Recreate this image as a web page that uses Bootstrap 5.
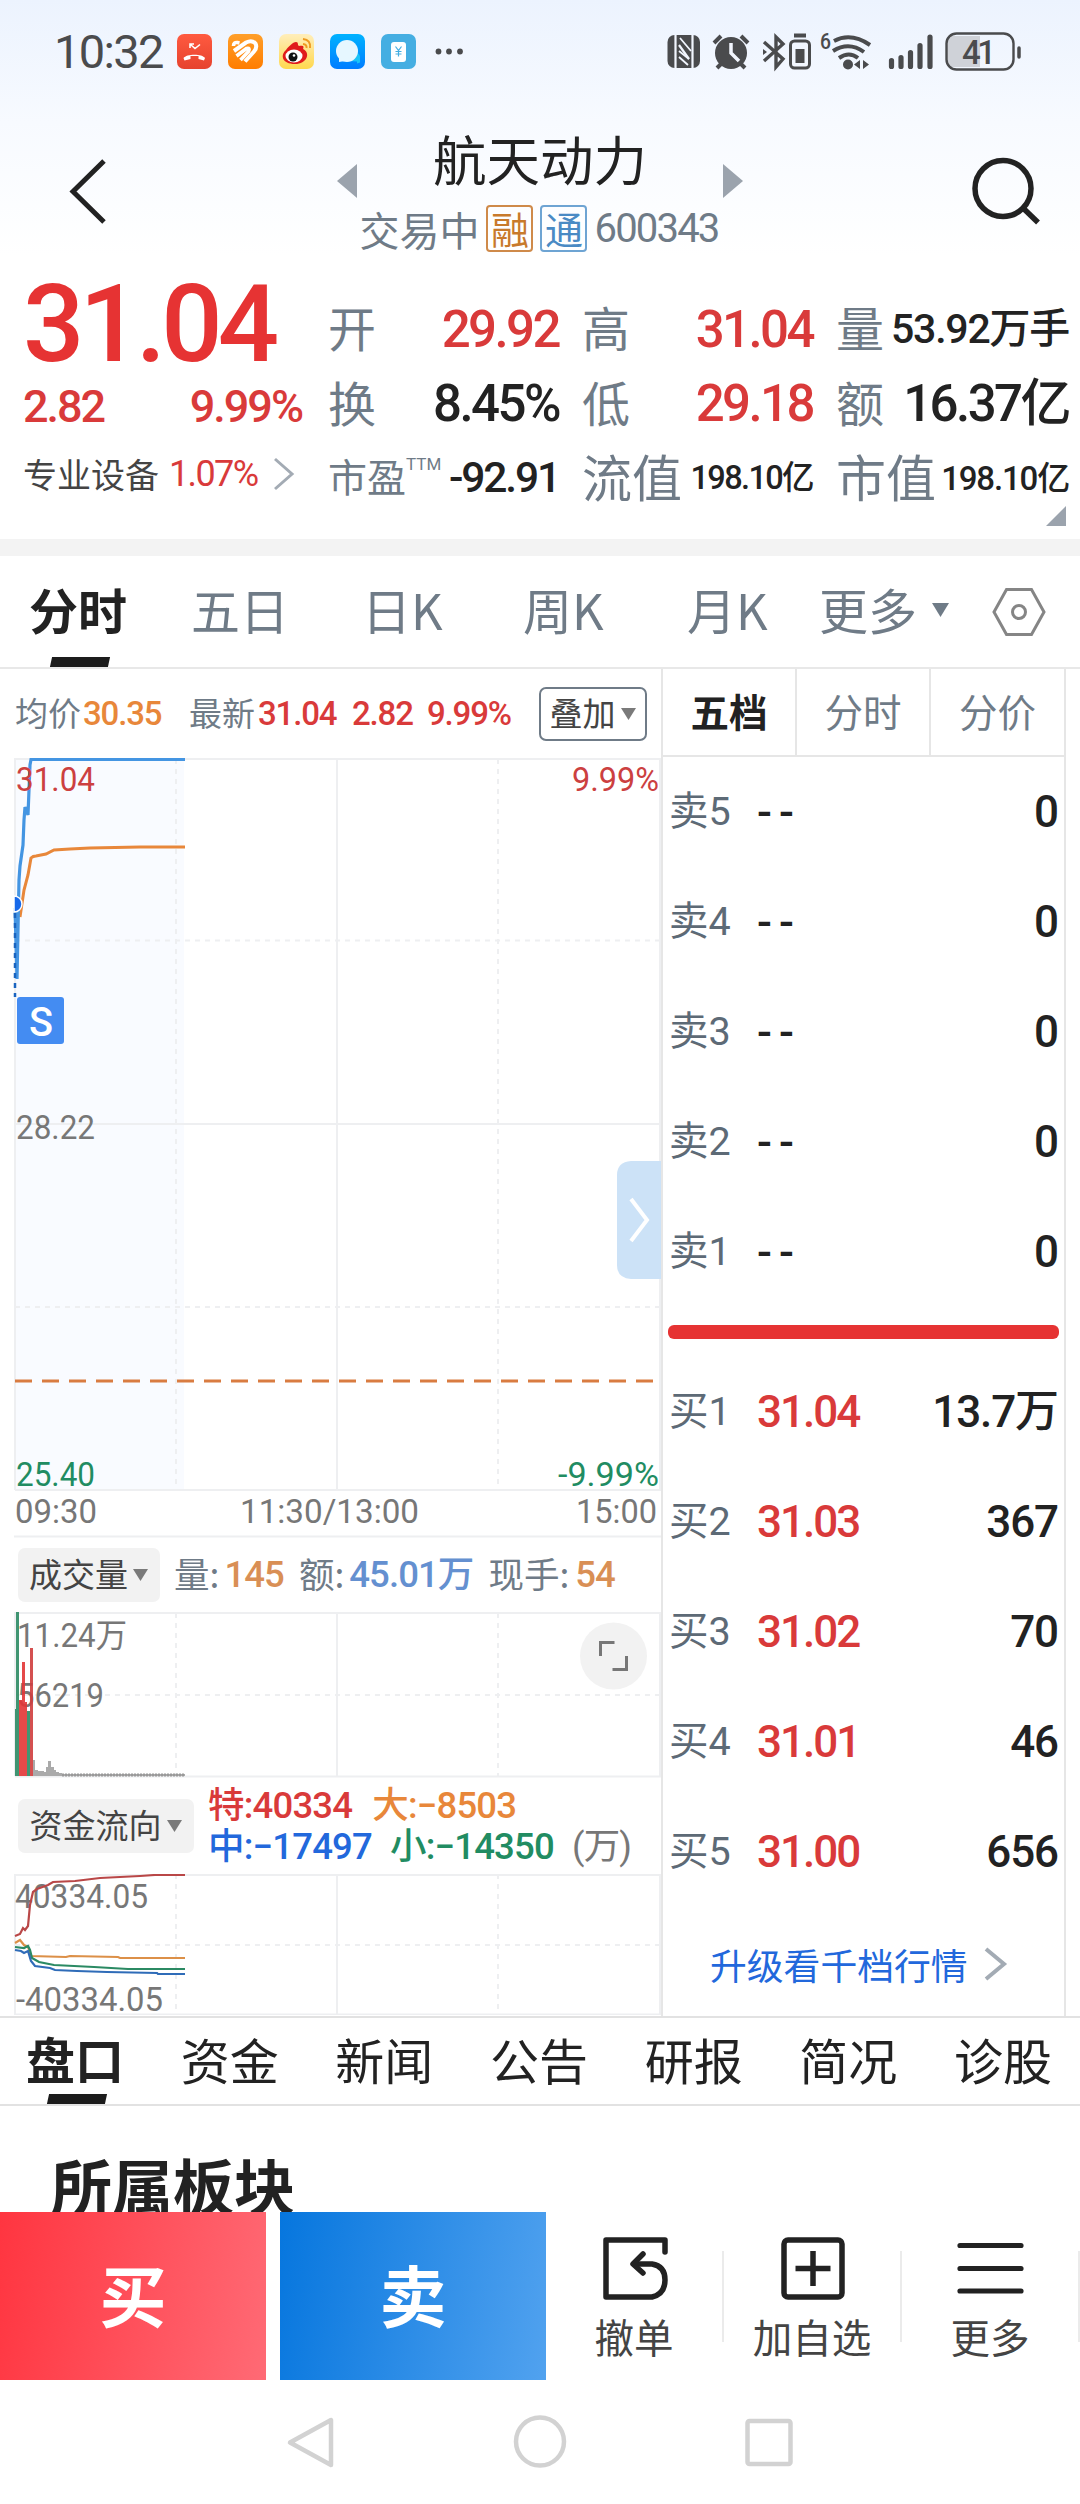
<!DOCTYPE html>
<html lang="zh-CN">
<head>
<meta charset="utf-8">
<meta name="viewport" content="width=device-width, initial-scale=1">
<title>航天动力 600343</title>
<link rel="stylesheet" href="https://cdn.jsdelivr.net/npm/bootstrap@5.3.0/dist/css/bootstrap.min.css">
<style>
:root{--ink:#222;--slate:#6f7b87;--up:#d93a3a;--down:#218c62;--orange:#e8873a;--line:#e6e6e6}
body{width:1080px;height:2504px;overflow:hidden;background:#fff;color:var(--ink);font-family:Roboto,"Noto Sans CJK SC",sans-serif;line-height:1;letter-spacing:0}
svg{display:block;flex:none}
.num{font-family:Roboto,"Noto Sans CJK SC",sans-serif;letter-spacing:-.045em;white-space:nowrap}
.med{font-weight:500}
.cjk{font-family:"Noto Sans CJK SC",sans-serif;white-space:nowrap}
.slate{color:var(--slate)}.up{color:var(--up)}.down{color:var(--down)}.orange{color:var(--orange)}.blue{color:#2268dc}
.top-zone{height:270px;background:linear-gradient(#ecf3fe,#f7faff 45%,#fff 95%)}
.status{height:103px;padding:0 58px 0 54px}
.clock{font-size:47px;color:#4a4b4d;font-weight:400;letter-spacing:-.035em;width:123px}
.head{height:167px}
.head-mid{width:412px;padding-top:28px}
.head-mid svg{overflow:visible}
.stock{font-size:53.5px;line-height:54px}
.sub{font-size:40px;margin-top:20px;gap:7px;margin-right:2px}
.mark-box{width:47px;height:47px;border:2px solid #cf8a4a;border-radius:4px;font-size:38px;line-height:38px;color:#c87a2c;padding-bottom:2px}
.mark-box.tong{border-color:#6ea4d3;color:#4a8ac4}
.quote{height:269px;display:grid;grid-template-columns:305px 254px 254px 256px}
.quote .qc{padding-left:23px}
.big{font-size:108px;color:#e63333;font-weight:500;letter-spacing:-.045em;height:108px;line-height:108px}
.chg{font-size:45px;height:56px;padding-right:3px}
.sector{height:80px;font-size:34px}
.qrow{height:74.500px}
.qrow>.cjk,.qrow>.d-flex{padding-bottom:6px}
.ql{font-size:48px}
.ql2{font-size:50px}
.qv{font-size:51px;font-weight:500;letter-spacing:-.05em}
.band{height:17px;background:#f3f3f3}
.ktabs{height:113px;border-bottom:2px solid #e8e8e8;display:grid;grid-template-columns:29px 162px 171px 161px 164px 132px 112px 60px 1fr;font-size:49px;align-items:center;color:var(--slate)}
.ktabs>span{padding-bottom:6px}
.slant{height:10px;width:58px;background:#1c1c1c;transform:skewX(-12deg)}
.main{height:1349px;border-bottom:2px solid #e2e2e2}
.left{width:661px}
.info{height:89px;margin-left:15px;display:grid;grid-template-columns:68px 106px 69px 94px 75px 112px 1fr;align-items:center;font-size:33px}
.info .med{letter-spacing:-.035em}
.info>.cjk{padding-bottom:3px}
.pillbtn{height:54px;border-radius:7px;font-size:33px;color:#444}
.pillbtn .cjk{padding-bottom:3px}
.overlay-btn{border:2px solid #6f7b87;width:108px}
.gray-btn{background:#f2f2f2}
.volrow{height:74px;padding-left:18px;font-size:35.500px}
.volrow .num{font-size:36.500px;letter-spacing:-.025em}
.volrow>.slate{padding-bottom:4px}
.fundrow{height:96px;padding-left:18px;font-size:36.500px}
.fundrow .num{letter-spacing:-.022em;line-height:41px;margin-left:14px}
.right-col{width:405px;border-left:2px solid var(--line);border-right:2px solid var(--line)}
.btabs{height:88px;border-bottom:2px solid var(--line);font-size:38.500px}
.btabs>div{width:134px;border-right:2px solid var(--line);padding-bottom:4px}
.btabs>div:last-child{border:0;width:133px}
.lv{height:110px;display:grid;grid-template-columns:88px 1fr auto;align-items:center;padding:0 6px 1px 6px;font-size:44px}
.lv .lab{font-size:39.500px;color:#5d6a76;letter-spacing:0}
.lv .med:last-child{letter-spacing:-.025em}
.bar-split{height:14px;border-radius:6px;background:#e63333;margin:18px 5px 18px 5px}
.more-link{height:114px;font-size:36.800px;padding-left:47px;gap:16px}
.btm-tabs{height:88px;border-bottom:2px solid #e2e2e2;padding:0 28px 0 26px;font-size:49px}
.btm-tabs>span{padding-bottom:6px}
.sect{height:106px;overflow:hidden;padding:48px 0 0 51px;font-size:61px;font-weight:700}
.acts{height:168px}
.buy,.sell{width:266px;font-size:67px;font-weight:700;color:#fff;padding-bottom:8px}
.buy{background:linear-gradient(100deg,#ff3540,#ff6a75)}
.sell{background:linear-gradient(100deg,#0676de,#51a2ef);margin-left:14px}
.act{width:176px;font-size:39.500px;color:#444;padding-top:22px;gap:12px}
.vsep{width:2px;height:91px;background:#ebebeb}
.sysnav{height:124px}
svg text{font-family:Roboto,"Noto Sans CJK SC",sans-serif}
</style>
<script src="https://cdn.jsdelivr.net/npm/bootstrap@5.3.0/dist/js/bootstrap.bundle.min.js"></script>
</head>
<body>
<header class="top-zone">
  <div class="status d-flex align-items-center">
    <span class="num clock">10:32</span>
    <svg width="290" height="36" viewBox="177 34 290 36">
      <defs>
        <linearGradient id="ga" x2="0" y2="1"><stop stop-color="#ff5a40"/><stop offset="1" stop-color="#e6432e"/></linearGradient>
        <linearGradient id="gb" x2="0" y2="1"><stop stop-color="#ff9f2a"/><stop offset="1" stop-color="#ff7d00"/></linearGradient>
        <linearGradient id="gc" x2="0" y2="1"><stop stop-color="#ffeebb"/><stop offset="1" stop-color="#ffd84e"/></linearGradient>
        <linearGradient id="gd" x2="0" y2="1"><stop stop-color="#00b2ff"/><stop offset="1" stop-color="#007dff"/></linearGradient>
      </defs>
      <rect x="177" y="34" width="35" height="35" rx="7" fill="url(#ga)"/>
      <path d="M183.500 58c3-4.500 19-4.500 21.500 0l-1 2.500-5.500-1.500v-3h-8v3l-6 1.500z" fill="#fff"/>
      <path d="M190 48v-4h4M190.500 44.500l4.500 4 5-4" fill="none" stroke="#fff" stroke-width="1.600"/>
      <rect x="228" y="34" width="35" height="35" rx="7" fill="url(#gb)"/>
      <g fill="none" stroke="#fff" stroke-width="4"><path d="M234 51L246 42.500q6-3 9.500 1 2 4-1.500 8l-9 10"/><path d="M233.500 46q0-4 4-3.500l2 .5M236.500 56l10-7.500q4-1 2 3l-8 8.500" stroke-width="3.600"/></g>
      <rect x="279" y="34" width="35" height="35" rx="7" fill="url(#gc)"/>
      <path d="M296 42c3 0 1 3 3 4 5-1 5 1 4 3 8 4 4 15-8 15-13 0-15-9-9-14 2-3 7-8 10-8z" fill="#e01b1b"/>
      <ellipse cx="294" cy="56" rx="8.500" ry="6.500" fill="#fff"/><circle cx="293" cy="57" r="4.500" fill="#111"/><circle cx="294" cy="55.500" r="1.300" fill="#fff"/>
      <path d="M303 39q8 1 7 9M303 44q4 .5 3.500 4" fill="none" stroke="#ee9a20" stroke-width="2"/>
      <rect x="330" y="34" width="35" height="35" rx="7" fill="url(#gd)"/>
      <path d="M349 61l8 .5v2l3-1v-6q-1-4-5-4z" fill="#19c3f7"/>
      <circle cx="347" cy="51" r="11" fill="#e6f7ff"/><path d="M339 57l0 5 6-1z" fill="#e6f7ff"/>
      <rect x="381" y="34" width="35" height="35" rx="7" fill="#45aee2"/>
      <rect x="391" y="42" width="15" height="20" rx="3" fill="#fff"/>
      <path d="M395.500 46.500l3 4 3-4M398.500 50.500v6M395.500 51.500h6M395.500 54h6" fill="none" stroke="#45aee2" stroke-width="1.200"/>
      <g fill="#4a4b4d"><circle cx="438.500" cy="51.500" r="2.900"/><circle cx="449" cy="51.500" r="2.900"/><circle cx="460" cy="51.500" r="2.900"/></g>
    </svg>
    <svg class="ms-auto" width="357" height="42" viewBox="665 31 357 42" fill="none" stroke="#4a4b4d" stroke-width="3">
      <rect x="667.500" y="35" width="32.500" height="33" rx="7" fill="#4a4b4d" stroke="none"/>
      <path d="M675.500 35v33M692.500 35v33" stroke="#f2f6fe" stroke-width="2.200"/>
      <path d="M679 45l10 14" stroke="#f2f6fe" stroke-width="2.200"/><path d="M679 51l10 8M679 57l9 8M680 38l11 13" stroke="#f2f6fe" stroke-width="1.800"/>
      <circle cx="731" cy="53" r="16" fill="#4a4b4d" stroke="none"/>
      <path d="M714 43l7-7M748 43l-7-7M717 68l4-4M745 68l-4-4" stroke-width="4"/>
      <path d="M731 43v10l8 8" stroke="#f2f6fe" stroke-width="3.500"/>
      <path d="M764 42l19 17-7 8V37l7 7-19 17" stroke-width="3.400"/><path d="M763 49l4 3-4 3z" fill="#4a4b4d" stroke="none"/>
      <rect x="790.500" y="41" width="19" height="27" rx="4"/><path d="M794 35.500h12" stroke-width="4"/><rect x="795.500" y="49" width="9" height="14" fill="#4a4b4d" stroke="none"/>
      <text x="820" y="49" font-size="22" font-weight="500" fill="#4a4b4d" stroke="none" textLength="11" lengthAdjust="spacingAndGlyphs">6</text>
      <path d="M834 41q17-9 36 4M833 51q16-10 31 1M839 58q10-7 19 0" stroke-width="4"/>
      <circle cx="848" cy="64.500" r="5" fill="#4a4b4d" stroke="none"/><path d="M860 60v9l-6-4.500zM863 60v9l6-4.500z" fill="#4a4b4d" stroke="none"/>
      <path d="M891.500 60.500v6M901 57.500v9M910.500 52.500v14M920 45.500v21M930 37v29.500" stroke-width="5.200" stroke-linecap="round"/>
      <path d="M950 36h30v31h-30q-3.500-1-3.500-5V41q0-4 3.500-5z" fill="#cfd2d8" stroke="none"/>
      <rect x="946.500" y="33.500" width="67" height="36" rx="10" stroke-width="2.400"/>
      <path d="M1019 48v9" stroke-width="3.500" stroke-linecap="round"/>
      <text x="962" y="63.500" font-size="33" font-weight="500" fill="#4a4b4d" stroke="none" textLength="34">41</text>
    </svg>
  </div>
  <div class="head d-flex justify-content-between">
    <svg width="334" height="167" viewBox="0 103 334 167"><path d="M104 161L73 191.500l31 30.500" fill="none" stroke="#222" stroke-width="5"/></svg>
    <div class="head-mid d-flex flex-column align-items-center">
      <div class="d-flex align-items-center justify-content-between w-100">
        <svg width="24" height="54" viewBox="334 131 24 54"><path d="M357 164v34l-20-17z" fill="#9ba3ad"/></svg>
        <span class="cjk stock">航天动力</span>
        <svg width="24" height="54" viewBox="722 131 24 54"><path d="M723 164v34l20-17z" fill="#9ba3ad"/></svg>
      </div>
      <div class="sub d-flex align-items-center slate">
        <span class="cjk">交易中</span>
        <span class="cjk mark-box d-flex align-items-center justify-content-center">融</span>
        <span class="cjk mark-box tong d-flex align-items-center justify-content-center">通</span>
        <span class="num">600343</span>
      </div>
    </div>
    <svg width="334" height="167" viewBox="746 103 334 167" fill="none" stroke="#222" stroke-width="5.500"><circle cx="1003" cy="188.500" r="28"/><path d="M1023 208l15 14.500"/></svg>
  </div>
</header>

<section class="quote">
  <div class="qc">
    <div class="num big">31.04</div>
    <div class="d-flex justify-content-between align-items-center num med up chg"><span>2.82</span><span>9.99%</span></div>
    <div class="d-flex align-items-center sector">
      <span class="cjk" style="color:#444">专业设备</span><span class="num up" style="font-size:36px;margin-left:10px">1.07%</span>
      <svg class="ms-auto" width="32" height="36" viewBox="0 0 32 36"><path d="M2 3l17 15L2 33" fill="none" stroke="#a3abb4" stroke-width="3"/></svg>
    </div>
  </div>
  <div class="qc" style="padding-top:22px">
    <div class="qrow d-flex justify-content-between align-items-center"><span class="cjk ql slate">开</span><span class="num qv up">29.92</span></div>
    <div class="qrow d-flex justify-content-between align-items-center"><span class="cjk ql slate">换</span><span class="num qv">8.45%</span></div>
    <div class="qrow d-flex justify-content-between align-items-center"><span class="d-flex"><span class="cjk slate" style="font-size:39px">市盈</span><span class="slate" style="font-size:17px">TTM</span></span><span class="num qv" style="font-size:42.500px">-92.91</span></div>
  </div>
  <div class="qc" style="padding-top:22px">
    <div class="qrow d-flex justify-content-between align-items-center"><span class="cjk ql slate">高</span><span class="num qv up">31.04</span></div>
    <div class="qrow d-flex justify-content-between align-items-center"><span class="cjk ql slate">低</span><span class="num qv up">29.18</span></div>
    <div class="qrow d-flex justify-content-between align-items-center"><span class="cjk ql2 slate">流值</span><span class="num qv" style="font-size:32.500px">198.10亿</span></div>
  </div>
  <div class="qc" style="padding-top:22px">
    <div class="qrow d-flex justify-content-between align-items-center"><span class="cjk ql slate">量</span><span class="num qv" style="font-size:41px;letter-spacing:-.03em">53.92万手</span></div>
    <div class="qrow d-flex justify-content-between align-items-center"><span class="cjk ql slate">额</span><span class="num qv">16.37亿</span></div>
    <div class="qrow d-flex justify-content-between align-items-center"><span class="cjk ql2 slate">市值</span><span class="num qv" style="font-size:33px;letter-spacing:-.035em">198.10亿</span></div>
    <svg class="ms-auto overflow-visible" width="22" height="20" viewBox="0 0 22 20"><path d="M19 -10v20h-20z" fill="#9ba3ad"/></svg>
  </div>
</section>
<div class="band"></div>

<nav class="ktabs cjk">
  <span></span>
  <div class="h-100 d-flex flex-column justify-content-between" style="padding-top:28px"><b style="color:#222">分时</b><i class="slant" style="margin-left:22px"></i></div>
  <span>五日</span><span>日K</span><span>周K</span><span>月K</span><span>更多</span>
  <svg width="20" height="24" viewBox="0 0 20 24"><path d="M1 3h17l-8.500 14z" fill="#6f7b87"/></svg>
  <svg width="56" height="54" viewBox="0 0 56 54" fill="none" stroke="#858585" stroke-width="3"><path d="M15.500 4.500h25L53 27 40.500 49.500h-25L3 27z"/><circle cx="28" cy="27" r="6.500"/></svg>
</nav>

<main class="main d-flex">
  <div class="left">
    <div class="info">
      <span class="cjk slate">均价</span><span class="num med orange">30.35</span><span class="cjk slate">最新</span><span class="num med up">31.04</span><span class="num med up">2.82</span><span class="num med up">9.99%</span>
      <span class="pillbtn overlay-btn d-flex align-items-center justify-content-center gap-1"><span class="cjk">叠加</span><svg width="17" height="14" viewBox="0 0 17 14"><path d="M1 1h15L8.500 13z" fill="#7a7a7a"/></svg></span>
    </div>
    <svg width="661" height="780" viewBox="0 758 661 780" fill="none">
      <path d="M15 758H184V1490H15z" fill="#f9fbff"/>
      <g stroke="#eeeff1" stroke-width="2"><path d="M14 759H661M15 758V1490M660 758V1490M337 758V1490M15 1124H661M15 1490H661M14 1536.500H661"/><path stroke-dasharray="5 5" d="M176 759V1490M498 759V1490M15 940.500H661M15 1307H661"/></g>
      <path d="M15 1381H656" stroke="#d97c41" stroke-width="3" stroke-dasharray="17 10"/>
      <path d="M20 917L24 890 28 875 31 858Q33 856 36 856L46 854 54 850 70 849 90 848 140 847H185" stroke="#e8873a" stroke-width="3"/>
      <path d="M15 908L17 979 19 880 20 866 23 845 24 820 25 807 28 815 30 765 31 759.500H185" stroke="#4495e2" stroke-width="3.200"/>
      <path d="M15 913v84" stroke="#1a64c0" stroke-width="2.500" stroke-dasharray="5 5"/>
      <path d="M14 896a8 8 0 0 1 0 16z" fill="#1769ea" stroke="#fff" stroke-width="1.500"/>
      <rect x="17" y="997" width="47" height="47" rx="3" fill="#448cf2"/>
      <text x="29" y="1036" font-size="41" font-weight="500" fill="#fff" textLength="24" lengthAdjust="spacingAndGlyphs">S</text>
      <g font-size="33.500" fill="#777">
        <text x="16" y="791" fill="#cc4040" textLength="79" lengthAdjust="spacingAndGlyphs">31.04</text>
        <text x="572" y="791" fill="#cc4040" textLength="87" lengthAdjust="spacingAndGlyphs">9.99%</text>
        <text x="16" y="1139" textLength="79" lengthAdjust="spacingAndGlyphs">28.22</text>
        <text x="16" y="1486" fill="#218c62" textLength="79" lengthAdjust="spacingAndGlyphs">25.40</text>
        <text x="558" y="1486" fill="#218c62" textLength="101" lengthAdjust="spacingAndGlyphs">-9.99%</text>
        <text x="15" y="1523" textLength="82" lengthAdjust="spacingAndGlyphs">09:30</text>
        <text x="240" y="1523" textLength="179" lengthAdjust="spacingAndGlyphs">11:30/13:00</text>
        <text x="576" y="1523" textLength="81" lengthAdjust="spacingAndGlyphs">15:00</text>
      </g>
      <path d="M661 1161h-30q-14 1-14 14v90q0 13 14 14h30z" fill="#cce2f7"/>
      <path d="M631 1199l16 21-16 21" stroke="#fff" stroke-width="4"/>
    </svg>
    <div class="volrow d-flex align-items-center">
      <span class="pillbtn gray-btn d-flex align-items-center justify-content-center gap-1" style="width:142px"><span class="cjk">成交量</span><svg width="17" height="14" viewBox="0 0 17 14"><path d="M1 1h15L8.500 13z" fill="#7a7a7a"/></svg></span>
      <span class="cjk slate" style="margin-left:14px">量:</span><span class="num med" style="color:#d98f55;margin-left:5px">145</span>
      <span class="cjk slate" style="margin-left:15px">额:</span><span class="num med" style="color:#6490d0;margin-left:5px">45.01万</span>
      <span class="cjk slate" style="margin-left:15px">现手:</span><span class="num med" style="color:#d98f55;margin-left:6px">54</span>
    </div>
    <svg width="661" height="166" viewBox="0 1612 661 166" fill="none">
      <g stroke="#eeeff1" stroke-width="2"><path d="M14 1613H661M15 1613V1776M660 1613V1776M337 1613V1776M15 1776.500H661"/><path stroke-dasharray="5 5" d="M176 1613V1776M498 1613V1776M15 1695H661"/></g>
      <g font-size="33.500" fill="#777"><text x="17" y="1647" textLength="110" lengthAdjust="spacingAndGlyphs">11.24万</text><text x="17" y="1707" textLength="87" lengthAdjust="spacingAndGlyphs">56219</text></g>
      <g fill-opacity=".9">
      <path d="M19 1776v-76h3v-38h3v40h2v74z" fill="#e23535"/>
      <path d="M15 1776v-67h1v-97h3v164zM27 1776v-65h3v65z" fill="#2b8a63"/>
      <path d="M30 1776v-128h3v128z" fill="#cf3d3d"/></g>
      <path d="M33 1776v-16h2v10h3v1h6v1h2v-5h2v-6h3v6h3v3h2v2h3v1h3v1h123v2z" fill="#aaa"/>
      <path d="M62 1775H185" stroke="#999" stroke-width="3" stroke-dasharray="2 1"/>
      <circle cx="613.500" cy="1656" r="33.500" fill="#f2f2f2"/><path d="M600.500 1656v-13.500h14M626.500 1656v13.500h-14" stroke="#777" stroke-width="3"/>
    </svg>
    <div class="fundrow d-flex align-items-center">
      <span class="pillbtn gray-btn d-flex align-items-center justify-content-center gap-1" style="width:176px"><span class="cjk">资金流向</span><svg width="17" height="14" viewBox="0 0 17 14"><path d="M1 1h15L8.500 13z" fill="#7a7a7a"/></svg></span>
      <div class="num med">
        <div class="d-flex" style="gap:20px"><span class="up">特:40334</span><span class="orange">大:−8503</span></div>
        <div class="d-flex" style="gap:18px"><span class="blue">中:−17497</span><span class="down">小:−14350</span><span style="color:#777;font-weight:400">(万)</span></div>
      </div>
    </div>
    <svg width="661" height="141" viewBox="0 1874 661 141" fill="none">
      <g stroke="#eeeff1" stroke-width="2"><path d="M14 1875H661M15 1874V2017M660 1874V2017M337 1874V2017M14 2014.500H661"/><path stroke-dasharray="5 5" d="M176 1874V2017M498 1874V2017M15 1945H661"/></g>
      <g font-size="33.500" fill="#777"><text x="15" y="1908" textLength="133" lengthAdjust="spacingAndGlyphs">40334.05</text><text x="16" y="2011" textLength="147" lengthAdjust="spacingAndGlyphs">-40334.05</text></g>
      <g stroke-width="2.200">
        <path d="M15 1936L20 1934 23 1928 25 1930 28 1926 30 1905 33 1892 37 1889 48 1885 53 1882 75 1881 100 1878 140 1876 155 1875H185" stroke="#b94747"/>
        <path d="M15 1943L20 1940 24 1945 28 1947 31 1956 66 1957 70 1956 118 1957 120 1958H185" stroke="#dc9048"/>
        <path d="M15 1947l9 1 4-2 2 4 2 8 7 4 15 3 20 1 20 1 34 2h57" stroke="#2b8a63"/>
        <path d="M15 1950l6 1 3 2 4-2 3 10 4 5 15 2 5 2 22 1 30 1 50 1 1 1h27" stroke="#2f6cb8"/>
      </g>
    </svg>
  </div>
  <div class="right-col">
    <div class="btabs d-flex cjk slate">
      <div class="d-flex align-items-center justify-content-center fw-bold" style="color:#222">五档</div>
      <div class="d-flex align-items-center justify-content-center">分时</div>
      <div class="d-flex align-items-center justify-content-center">分价</div>
    </div>
    <div class="lv num"><span class="lab">卖5</span><span class="med">- -</span><span class="med">0</span></div>
    <div class="lv num"><span class="lab">卖4</span><span class="med">- -</span><span class="med">0</span></div>
    <div class="lv num"><span class="lab">卖3</span><span class="med">- -</span><span class="med">0</span></div>
    <div class="lv num"><span class="lab">卖2</span><span class="med">- -</span><span class="med">0</span></div>
    <div class="lv num"><span class="lab">卖1</span><span class="med">- -</span><span class="med">0</span></div>
    <div class="bar-split"></div>
    <div class="lv num"><span class="lab">买1</span><span class="med up">31.04</span><span class="med">13.7万</span></div>
    <div class="lv num"><span class="lab">买2</span><span class="med up">31.03</span><span class="med">367</span></div>
    <div class="lv num"><span class="lab">买3</span><span class="med up">31.02</span><span class="med">70</span></div>
    <div class="lv num"><span class="lab">买4</span><span class="med up">31.01</span><span class="med">46</span></div>
    <div class="lv num"><span class="lab">买5</span><span class="med up">31.00</span><span class="med">656</span></div>
    <div class="more-link d-flex align-items-center cjk blue"><span>升级看千档行情</span><svg width="24" height="34" viewBox="0 0 24 34"><path d="M2 2l18 15L2 32" fill="none" stroke="#a3abb4" stroke-width="4"/></svg></div>
  </div>
</main>

<nav class="btm-tabs cjk d-flex justify-content-between align-items-center">
  <div class="h-100 d-flex flex-column justify-content-between" style="padding-top:15px"><b>盘口</b><i class="slant" style="margin-left:22px"></i></div>
  <span>资金</span><span>新闻</span><span>公告</span><span>研报</span><span>简况</span><span>诊股</span>
</nav>
<section class="sect cjk">所属板块</section>

<footer>
  <div class="acts d-flex">
    <div class="buy cjk d-flex align-items-center justify-content-center">买</div>
    <div class="sell cjk d-flex align-items-center justify-content-center">卖</div>
    <div class="act cjk d-flex flex-column align-items-center">
      <svg width="72" height="70" viewBox="-2 0 72 70" fill="none" stroke="#222" stroke-width="5.500" stroke-linejoin="round"><path d="M65 18V6H6v57h46q13-3 13-17 0-14-13-16H34" stroke-linecap="round"/><path d="M43 20L33 30l10 9" stroke-linecap="round"/></svg>撤单</div>
    <div class="vsep align-self-center"></div>
    <div class="act cjk d-flex flex-column align-items-center">
      <svg width="72" height="70" viewBox="0 0 72 70" fill="none" stroke="#222" stroke-width="5.500"><rect x="8" y="6" width="58" height="57" rx="4"/><path d="M37 17v35M19.500 34.500h35"/></svg>加自选</div>
    <div class="vsep align-self-center"></div>
    <div class="act cjk d-flex flex-column align-items-center">
      <svg width="72" height="70" viewBox="0 0 72 70" fill="none" stroke="#222" stroke-width="5.200" stroke-linecap="round"><path d="M6 11.500h61M6 34.500h61M6 57h61"/></svg>更多</div>
    <div class="vsep align-self-center"></div>
  </div>
  <svg class="sysnav" width="1080" height="124" viewBox="0 2380 1080 124" fill="none" stroke="#d2d2d2" stroke-width="4.500" stroke-linejoin="round"><path d="M331 2420v45l-41-22.500z"/><circle cx="540" cy="2441.500" r="24"/><rect x="747.500" y="2421" width="43" height="43" rx="2"/></svg>
</footer>
<style>.overflow-visible{overflow:visible}</style>
</body>
</html>
